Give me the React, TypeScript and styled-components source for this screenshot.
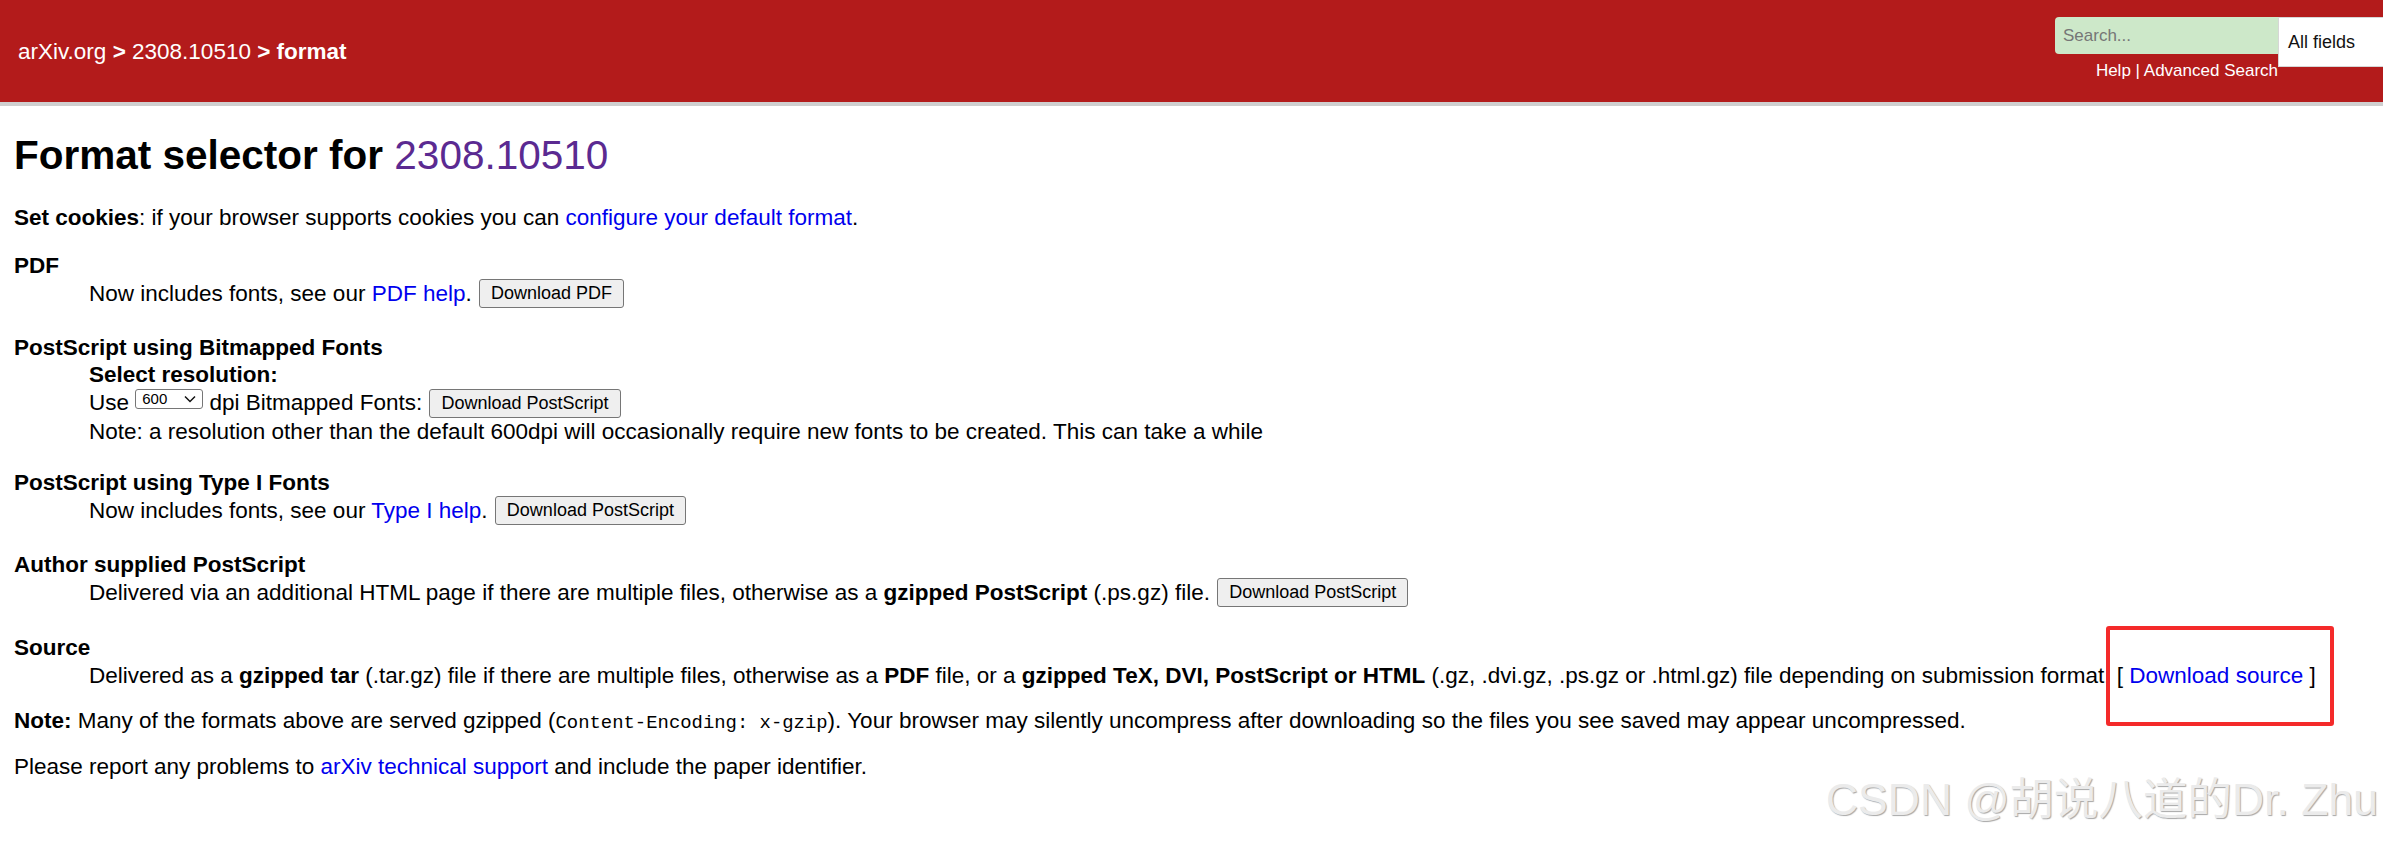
import React from 'react'
import styled, { createGlobalStyle } from 'styled-components'

const GlobalStyle = createGlobalStyle`
  html, body {
    margin: 0;
    padding: 0;
    background: #fff;
  }
  body {
    overflow: hidden;
    font-family: "Liberation Sans", Arial, sans-serif;
  }
`

const Page = styled.div`
  position: relative;
  width: 2383px;
  height: 843px;
  overflow: hidden;
`

const Header = styled.header`
  height: 102px;
  background: #b31b1b;
  border-bottom: 4px solid #cfcfcf;
  display: flex;
  justify-content: space-between;
  align-items: flex-start;
`

const Crumbs = styled.div`
  align-self: center;
  padding-left: 18px;
  margin-top: 2px;
  color: #fff;
  font-size: 22.5px;
  a {
    color: #fff;
    text-decoration: none;
  }
`

const SearchArea = styled.div`
  display: flex;
  align-items: flex-start;
  padding-top: 17px;
`

const SearchCol = styled.div`
  display: flex;
  flex-direction: column;
  align-items: flex-end;
  width: 223px;
`

const SearchInput = styled.input`
  box-sizing: border-box;
  width: 223px;
  height: 37px;
  border: none;
  border-radius: 4px 0 0 4px;
  background: #cde8c9;
  padding: 0 8px;
  font: 17px "Liberation Sans", Arial, sans-serif;
  color: #000;
  outline: none;
  &::placeholder {
    color: #767676;
  }
`

const HelpLinks = styled.div`
  margin-top: 7px;
  color: #fff;
  font-size: 17px;
  white-space: nowrap;
  a {
    color: #fff;
    text-decoration: none;
  }
`

const FieldSelect = styled.div`
  box-sizing: border-box;
  width: 105px;
  height: 50px;
  background: #fff;
  border: 1px solid #d6d6d6;
  border-right: none;
  display: flex;
  align-items: center;
  padding-left: 9px;
  font-size: 18px;
  color: #111;
`

const Main = styled.main`
  padding: 25px 14px 0;
  font-size: 22.5px;
  color: #000;
  a {
    color: #0000ee;
    text-decoration: none;
  }
`

const Title = styled.h1`
  margin: 0 0 25px;
  font-size: 40.5px;
  line-height: 48px;
  font-weight: bold;
  a {
    font-weight: normal;
    color: #5b2a91;
  }
`

const Para = styled.p<{ $space?: number }>`
  margin: ${(p) => p.$space ?? 0}px 0 0;
  line-height: ${(p) => (p.$space === undefined ? 27 : 30)}px;
  white-space: nowrap;
`

const Section = styled.section<{ $space: number }>`
  margin-top: ${(p) => p.$space}px;
`

const SectionTitle = styled.div`
  font-weight: bold;
  line-height: 27px;
`

const SectionBody = styled.div<{ $lh?: number }>`
  padding-left: 75px;
  line-height: ${(p) => p.$lh ?? 30}px;
  white-space: nowrap;
`

const Button = styled.button`
  font: 18px "Liberation Sans", Arial, sans-serif;
  line-height: normal;
  height: 29px;
  padding: 0 11px;
  margin-left: 1px;
  background: #efefef;
  border: 1px solid #767676;
  border-radius: 3px;
  color: #000;
  vertical-align: top;
`

const DpiSelect = styled.span`
  display: inline-flex;
  align-items: center;
  justify-content: space-between;
  box-sizing: border-box;
  width: 68px;
  height: 20px;
  padding: 0 6px;
  border: 1px solid #767676;
  border-radius: 3px;
  font-size: 15px;
  line-height: 18px;
  vertical-align: top;
  svg {
    display: block;
  }
`

const Mono = styled.code`
  font-family: "Liberation Mono", "Courier New", monospace;
  font-size: 18.9px;
`

const Marked = styled.span`
  position: relative;
  &::after {
    content: '';
    position: absolute;
    left: -11px;
    right: -18px;
    top: -37px;
    bottom: -38px;
    border: 4px solid #f42a2a;
    border-radius: 3px;
  }
`

const Watermark = styled.div`
  position: absolute;
  right: 5px;
  bottom: 21px;
  font-family: "Liberation Sans", "Noto Sans CJK SC", sans-serif;
  font-size: 44.5px;
  line-height: 1;
  color: #ebebeb;
  text-shadow: 1px 1px 1px rgba(0, 0, 0, 0.35);
  white-space: nowrap;
`

const Chevron = () => (
  <svg width="12" height="8" viewBox="0 0 12 8">
    <polyline points="1,1.5 6,6.5 11,1.5" fill="none" stroke="#111" strokeWidth="1.5" />
  </svg>
)

const App = () => {
  return (
    <Page>
      <GlobalStyle />
      <Header>
        <Crumbs>
          <a href="#">arXiv.org</a> <b>&gt;</b> <a href="#">2308.10510</a> <b>&gt; format</b>
        </Crumbs>
        <SearchArea>
          <SearchCol>
            <SearchInput placeholder="Search..." />
            <HelpLinks>
              <a href="#">Help</a> | <a href="#">Advanced Search</a>
            </HelpLinks>
          </SearchCol>
          <FieldSelect>All fields</FieldSelect>
        </SearchArea>
      </Header>

      <Main>
        <Title>
          Format selector for <a href="#">2308.10510</a>
        </Title>

        <Para>
          <b>Set cookies</b>: if your browser supports cookies you can{' '}
          <a href="#">configure your default format</a>.
        </Para>

        <Section $space={21}>
          <SectionTitle>PDF</SectionTitle>
          <SectionBody>
            Now includes fonts, see our <a href="#">PDF help</a>. <Button>Download PDF</Button>
          </SectionBody>
        </Section>

        <Section $space={25}>
          <SectionTitle>PostScript using Bitmapped Fonts</SectionTitle>
          <SectionBody $lh={28}>
            <b>Select resolution:</b>
            <br />
            Use{' '}
            <DpiSelect>
              600 <Chevron />
            </DpiSelect>{' '}
            dpi Bitmapped Fonts: <Button>Download PostScript</Button>
            <br />
            Note: a resolution other than the default 600dpi will occasionally require new fonts to be
            created. This can take a while
          </SectionBody>
        </Section>

        <Section $space={23}>
          <SectionTitle>PostScript using Type I Fonts</SectionTitle>
          <SectionBody>
            Now includes fonts, see our <a href="#">Type I help</a>.{' '}
            <Button>Download PostScript</Button>
          </SectionBody>
        </Section>

        <Section $space={25}>
          <SectionTitle>Author supplied PostScript</SectionTitle>
          <SectionBody>
            Delivered via an additional HTML page if there are multiple files, otherwise as a{' '}
            <b>gzipped PostScript</b> (.ps.gz) file. <Button>Download PostScript</Button>
          </SectionBody>
        </Section>

        <Section $space={26}>
          <SectionTitle>Source</SectionTitle>
          <SectionBody>
            Delivered as a <b>gzipped tar</b> (.tar.gz) file if there are multiple files, otherwise as
            a <b>PDF</b> file, or a <b>gzipped TeX, DVI, PostScript or HTML</b> (.gz, .dvi.gz, .ps.gz
            or .html.gz) file depending on submission format.{' '}
            <Marked>
              [ <a href="#">Download source</a> ]
            </Marked>
          </SectionBody>
        </Section>

        <Para $space={15}>
          <b>Note:</b> Many of the formats above are served gzipped (
          <Mono>Content-Encoding: x-gzip</Mono>). Your browser may silently uncompress after
          downloading so the files you see saved may appear uncompressed.
        </Para>

        <Para $space={14}>
          Please report any problems to <a href="#">arXiv technical support</a> and include the paper
          identifier.
        </Para>
      </Main>

      <Watermark>CSDN @胡说八道的Dr. Zhu</Watermark>
    </Page>
  )
}

export default App
